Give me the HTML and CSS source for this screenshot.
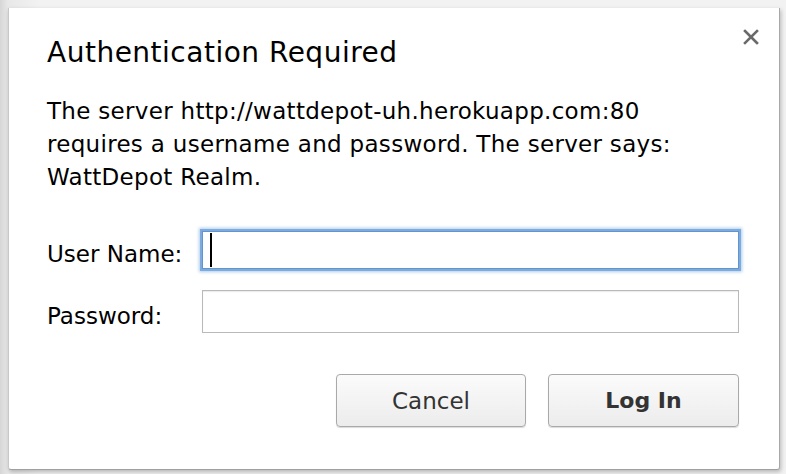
FILE: index.html
```html
<!DOCTYPE html>
<html>
<head>
<meta charset="utf-8">
<link rel="stylesheet" href="styles.css">
</head>
<body>
<div class="dialog">
  <button class="close" aria-label="Close">
    <svg width="16" height="16" viewBox="0 0 16 16"><path d="M2 2 L14 14 M14 2 L2 14" stroke="#6a6a6a" stroke-width="2.6" stroke-linecap="square"/></svg>
  </button>
  <h1 class="title">Authentication Required</h1>
  <p class="message">The server http://wattdepot-uh.herokuapp.com:80<br>requires a username and password. The server says:<br>WattDepot Realm.</p>
  <div class="form">
    <label class="label">User Name:</label>
    <div class="field focused"><span class="caret"></span></div>
    <label class="label">Password:</label>
    <div class="field"></div>
  </div>
  <div class="actions">
    <button class="btn">Cancel</button>
    <button class="btn primary">Log In</button>
  </div>
</div>
</body>
</html>
```
FILE: styles.css
```css
html, body {
  margin: 0;
  padding: 0;
}
body {
  width: 786px;
  height: 474px;
  background: linear-gradient(to right, #d6d6d6 0px, #e8e8e8 8px, #f2f2f2 40px);
  padding: 8px 0 0 8px;
  box-sizing: border-box;
  font-family: "DejaVu Sans", "Liberation Sans", sans-serif;
  overflow: hidden;
}
.dialog {
  position: relative;
  width: 772px;
  height: 462px;
  box-sizing: border-box;
  background: #fff;
  border-right: 1px solid #a8a8a8;
  border-bottom: 1px solid #a0a0a0;
  border-left: 1px solid #c8c8c8;
  border-radius: 0 0 3px 3px;
  box-shadow: 1px 2px 4px rgba(0,0,0,0.25);
  padding: 25px 40px 0 38px;
  display: flex;
  flex-direction: column;
}
.close {
  position: absolute;
  top: 21px;
  right: 20px;
  width: 16px;
  height: 16px;
  padding: 0;
  border: 0;
  background: none;
}
.close svg { display: block; }
.title {
  margin: 0;
  font-size: 28px;
  letter-spacing: 0.5px;
  font-weight: normal;
  line-height: 40px;
  color: #000;
}
.message {
  margin: 22px 0 0 0;
  font-size: 23px;
  letter-spacing: 0.3px;
  line-height: 33px;
  color: #000;
  white-space: nowrap;
}
.form {
  margin-top: 37px;
  display: grid;
  grid-template-columns: 155px 537px;
  row-gap: 21px;
  align-items: center;
}
.label {
  font-size: 23px;
  color: #000;
  padding-top: 8px;
}
.field {
  height: 43px;
  box-sizing: border-box;
  border: 1px solid #b9b9b9;
  box-shadow: inset 0 1px 1px rgba(0,0,0,0.08);
  background: #fff;
  display: flex;
  align-items: center;
  padding-left: 7px;
}
.field.focused {
  height: 38px;
  border: 1px solid #5f95d2;
  box-shadow: 0 0 0 2px #7eaadc, 0 0 3px 3px rgba(110,160,220,0.55);
}
.caret {
  display: block;
  width: 2px;
  height: 34px;
  background: #000;
}
.actions {
  margin-top: 41px;
  display: flex;
  justify-content: flex-end;
  gap: 22px;
}
.btn {
  width: 190px;
  height: 53px;
  border: 1px solid #a9a9a9;
  border-radius: 4px;
  background: linear-gradient(#fbfbfb, #ececec);
  box-shadow: 0 1px 1px rgba(0,0,0,0.15);
  font-family: "DejaVu Sans", "Liberation Sans", sans-serif;
  font-size: 23px;
  color: #333;
  padding: 0;
}
.btn.primary {
  width: 191px;
  font-weight: bold;
  font-size: 22px;
}
```
